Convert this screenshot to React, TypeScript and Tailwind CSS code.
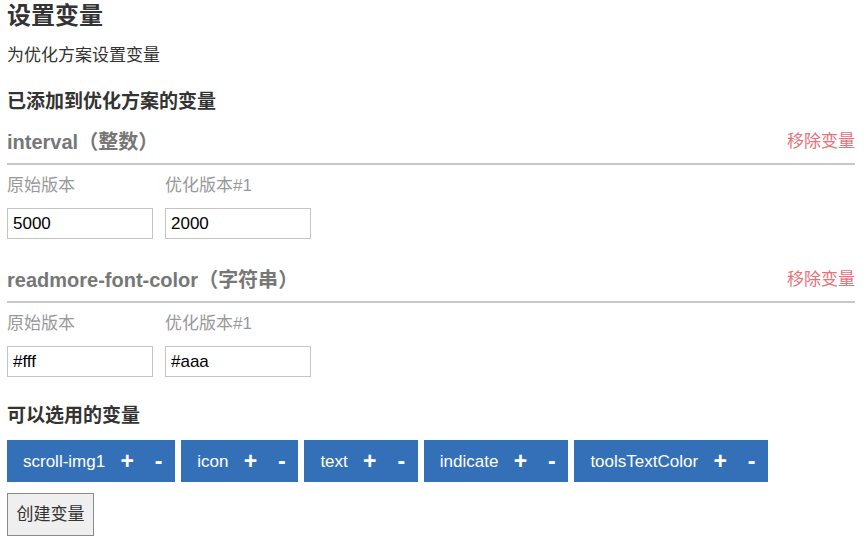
import React from 'react';

const font = { fontFamily: '"Liberation Sans", "Noto Sans CJK SC", sans-serif' };

type Variable = {
  name: string;
  kind: string;
  original: string;
  variant: string;
};

const added: Variable[] = [
  { name: 'interval', kind: '整数', original: '5000', variant: '2000' },
  { name: 'readmore-font-color', kind: '字符串', original: '#fff', variant: '#aaa' },
];

const available = ['scroll-img1', 'icon', 'text', 'indicate', 'toolsTextColor'];

function VariableSection({ v, first }: { v: Variable; first: boolean }) {
  return (
    <section className={first ? 'mt-[13px]' : 'mt-[27px]'}>
      <div className="flex items-center justify-between border-b-2 border-[#c8c8c8] pb-[7px]">
        <h4 className="text-[20px] font-bold leading-[28px] text-[#777]">
          {v.name}（{v.kind}）
        </h4>
        <button type="button" className="text-[17px] leading-[24px] text-[#e8717a]">
          移除变量
        </button>
      </div>
      <div className="mt-[9px] flex gap-[12px]">
        <div className="w-[146px]">
          <p className="text-[17px] leading-[24px] text-[#999]">原始版本</p>
          <input
            readOnly
            value={v.original}
            className="mt-[10px] h-[31px] w-[146px] border border-[#c4c4c4] px-[5px] text-[17px] text-black outline-none"
          />
        </div>
        <div className="w-[146px]">
          <p className="text-[17px] leading-[24px] text-[#999]">优化版本#1</p>
          <input
            readOnly
            value={v.variant}
            className="mt-[10px] h-[31px] w-[146px] border border-[#c4c4c4] px-[5px] text-[17px] text-black outline-none"
          />
        </div>
      </div>
    </section>
  );
}

export default function App() {
  return (
    <div className="min-h-screen bg-white pl-[7px] pr-[10px] text-[#333]" style={font}>
      <h1 className="text-[24px] font-bold leading-[32px] text-[#333]">设置变量</h1>
      <p className="mt-[12px] text-[17px] leading-[24px]">为优化方案设置变量</p>
      <h3 className="mt-[21px] text-[19px] font-bold leading-[26px]">已添加到优化方案的变量</h3>

      {added.map((v, i) => (
        <VariableSection key={v.name} v={v} first={i === 0} />
      ))}

      <h3 className="mt-[26px] text-[19px] font-bold leading-[26px]">可以选用的变量</h3>
      <div className="mt-[11px] flex gap-[6px]">
        {available.map((name) => (
          <div
            key={name}
            className="inline-flex h-[42px] items-center bg-[#3470b8] pl-[16px] pr-[12px] text-white"
          >
            <span className="text-[17px] leading-none">{name}</span>
            <span className="ml-[15px] flex w-[14px] justify-center text-[23px] font-bold leading-none">+</span>
            <span className="ml-[20px] flex w-[9px] justify-center text-[23px] font-bold leading-none">-</span>
          </div>
        ))}
      </div>

      <button
        type="button"
        className="mt-[11px] h-[43px] w-[87px] border border-[#8a8a8a] bg-[#efefef] text-[17px] text-[#333]"
      >
        创建变量
      </button>
    </div>
  );
}
